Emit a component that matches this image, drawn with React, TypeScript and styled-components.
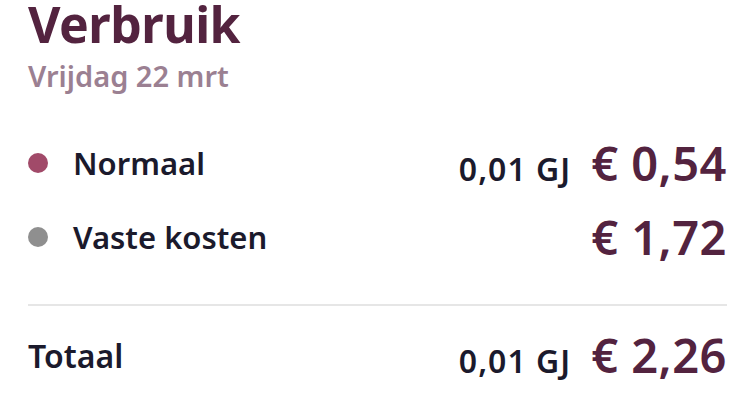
import React from 'react';
import styled, { createGlobalStyle } from 'styled-components';

const GlobalStyle = createGlobalStyle`
  body {
    margin: 0;
    background: #ffffff;
    font-family: 'Noto Sans', 'Open Sans', sans-serif;
  }
`;

type Line = {
  label: string;
  color: string;
  amount?: string;
  price: string;
};

const lines: Line[] = [
  { label: 'Normaal', color: '#a14a69', amount: '0,01 GJ', price: '€ 0,54' },
  { label: 'Vaste kosten', color: '#8f8f8f', price: '€ 1,72' },
];

const App = () => {
  return (
    <>
      <GlobalStyle />
      <Panel>
        <Header>
          <Title>Verbruik</Title>
          <Subtitle>Vrijdag 22 mrt</Subtitle>
        </Header>
        <List>
          {lines.map((line) => (
            <Row key={line.label}>
              <Label>
                <Dot color={line.color} />
                {line.label}
              </Label>
              <Values>
                {line.amount && <Amount>{line.amount}</Amount>}
                <Price>{line.price}</Price>
              </Values>
            </Row>
          ))}
        </List>
        <Total>
          <TotalLabel>Totaal</TotalLabel>
          <Values>
            <Amount>0,01 GJ</Amount>
            <Price>€ 2,26</Price>
          </Values>
        </Total>
      </Panel>
    </>
  );
};

export default App;

const Panel = styled.div`
  width: 755px;
  height: 402px;
  box-sizing: border-box;
  padding: 0 28px;
  display: flex;
  flex-direction: column;
`;

const Header = styled.div`
  display: flex;
  flex-direction: column;
`;

const Title = styled.h1`
  margin: 0;
  font-size: 50px;
  line-height: 48px;
  font-weight: 700;
  color: #53233f;
  letter-spacing: -0.5px;
`;

const Subtitle = styled.p`
  margin: 11px 0 0;
  font-size: 29px;
  line-height: 34px;
  font-weight: 600;
  color: #9b8092;
`;

const List = styled.div`
  display: flex;
  flex-direction: column;
  margin-top: 33px;
  padding-bottom: 30px;
  border-bottom: 2px solid #e6e6e6;
`;

const Row = styled.div`
  display: flex;
  justify-content: space-between;
  align-items: center;
  height: 74px;
`;

const Label = styled.div`
  display: flex;
  align-items: center;
  gap: 25px;
  font-size: 31px;
  font-weight: 600;
  color: #1b1a2c;
`;

const Dot = styled.span<{ color: string }>`
  width: 20px;
  height: 20px;
  border-radius: 50%;
  background: ${(p) => p.color};
`;

const Values = styled.div`
  display: flex;
  align-items: baseline;
  gap: 20px;
`;

const Amount = styled.span`
  font-size: 32px;
  font-weight: 600;
  color: #1b1a2c;
  letter-spacing: 1px;
`;

const Price = styled.span`
  font-size: 47px;
  font-weight: 600;
  color: #53233f;
  letter-spacing: 0.5px;
`;

const Total = styled(Row)`
  margin-top: 12px;
`;

const TotalLabel = styled.span`
  font-size: 32px;
  font-weight: 600;
  color: #1b1a2c;
`;
